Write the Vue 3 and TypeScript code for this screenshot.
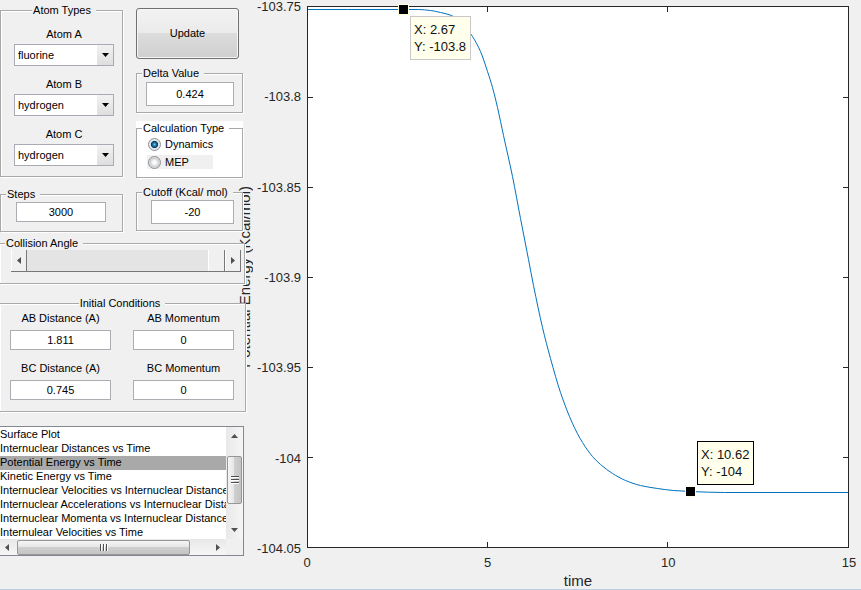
<script setup lang="ts">
import { computed, ref } from 'vue'

interface Tip {
  x: number
  y: number
  lines: string[]
  place: 'below' | 'above'
}

const atoms = ref([
  { id: 'atom-a', label: 'Atom A', value: 'fluorine' },
  { id: 'atom-b', label: 'Atom B', value: 'hydrogen' },
  { id: 'atom-c', label: 'Atom C', value: 'hydrogen' },
])
const elements = ['hydrogen', 'fluorine']

const delta = ref('0.424')
const calculation = ref('Dynamics')
const steps = ref('3000')
const cutoff = ref('-20')
const angle = ref(180)

const conditions = ref([
  { id: 'ab-distance', label: 'AB Distance (A)', value: '1.811' },
  { id: 'ab-momentum', label: 'AB Momentum', value: '0' },
  { id: 'bc-distance', label: 'BC Distance (A)', value: '0.745' },
  { id: 'bc-momentum', label: 'BC Momentum', value: '0' },
])

const plots = [
  'Surface Plot',
  'Internuclear Distances vs Time',
  'Potential Energy vs Time',
  'Kinetic Energy vs Time',
  'Internuclear Velocities vs Internuclear Distance',
  'Internuclear Accelerations vs Internuclear Distance',
  'Internuclear Momenta vs Internuclear Distance',
  'Internulear Velocities vs Time',
]
const selectedPlot = ref('Potential Energy vs Time')

const yTicks = ['-103.75', '-103.8', '-103.85', '-103.9', '-103.95', '-104', '-104.05']
const xTicks = ['0', '5', '10', '15']
const pct = (i: number, n: number) => `${(i / (n - 1)) * 100}%`
const place = (v: number) => `${((v - 1) / 540) * 100}%`

/* Samples of the energy curve in plot units */
const samples: [number, number][] = [
  [0, 3], [40, 3], [96, 3], [111, 3], [123, 4], [133, 6], [144, 9], [155, 17], [165, 30],
  [173, 45], [180, 65], [185, 81], [190, 101], [196, 129], [205, 170], [213, 212], [221, 253],
  [226, 279], [235, 321], [243, 352], [253, 386], [265, 417], [275, 436], [285, 450],
  [293, 458], [305, 467], [318, 474], [333, 479], [350, 482], [366, 484], [383, 485],
  [417, 486], [541, 486],
]

/* Monotone cubic through the samples, written as bezier segments */
const curve = computed(() => {
  const p = samples
  const slope = p.map((_, i) => {
    if (i === 0 || i === p.length - 1) return 0
    const a = (p[i][1] - p[i - 1][1]) / (p[i][0] - p[i - 1][0])
    const b = (p[i + 1][1] - p[i][1]) / (p[i + 1][0] - p[i][0])
    return a * b <= 0 ? 0 : (2 * a * b) / (a + b)
  })
  let d = `M${p[0][0]} ${p[0][1]}`
  for (let i = 0; i < p.length - 1; i++) {
    const h = (p[i + 1][0] - p[i][0]) / 3
    d += `C${p[i][0] + h} ${p[i][1] + slope[i] * h} ${p[i + 1][0] - h} ${p[i + 1][1] - slope[i + 1] * h} ${p[i + 1][0]} ${p[i + 1][1]}`
  }
  return d
})

const tips: Tip[] = [
  { x: 96, y: 3, lines: ['X: 2.67', 'Y: -103.8'], place: 'below' },
  { x: 383, y: 485, lines: ['X: 10.62', 'Y: -104'], place: 'above' },
]
</script>

<template>
  <main class="window">
    <form class="sidebar" @submit.prevent>
      <div class="columns">
        <div class="column">
          <fieldset class="group atoms">
            <legend class="centered">Atom Types</legend>
            <div v-for="atom in atoms" :key="atom.id" class="atom">
              <label :for="atom.id">{{ atom.label }}</label>
              <div class="dropdown">
                <select :id="atom.id" v-model="atom.value">
                  <option v-for="e in elements" :key="e">{{ e }}</option>
                </select>
                <span class="arrow"><svg width="7" height="4" viewBox="0 0 7 4"><path d="M0 0H7L3.5 4Z" /></svg></span>
              </div>
            </div>
          </fieldset>
          <fieldset class="group steps">
            <legend>Steps</legend>
            <input v-model="steps" class="field" type="text" aria-label="Steps" />
          </fieldset>
        </div>

        <div class="column right">
          <button class="update" type="submit">Update</button>
          <fieldset class="group delta">
            <legend>Delta Value</legend>
            <input v-model="delta" class="field tall" type="text" aria-label="Delta Value" />
          </fieldset>
          <div class="calc">
            <fieldset class="group">
              <legend>Calculation Type</legend>
              <label class="radio"><input v-model="calculation" type="radio" value="Dynamics" />Dynamics</label>
              <label class="radio shaded"><input v-model="calculation" type="radio" value="MEP" />MEP</label>
            </fieldset>
          </div>
          <fieldset class="group cutoff">
            <legend>Cutoff (Kcal/ mol)</legend>
            <input v-model="cutoff" class="field tall" type="text" aria-label="Cutoff (Kcal/ mol)" />
          </fieldset>
        </div>
      </div>

      <fieldset class="group collision">
        <legend>Collision Angle</legend>
        <div class="slider">
          <button type="button" aria-label="Decrease angle" @click="angle = Math.max(0, angle - 1)">
            <svg width="4" height="7" viewBox="0 0 4 7"><path d="M4 0V7L0 3.5Z" /></svg>
          </button>
          <input v-model.number="angle" type="range" min="0" max="180" aria-label="Collision Angle" />
          <button type="button" aria-label="Increase angle" @click="angle = Math.min(180, angle + 1)">
            <svg width="4" height="7" viewBox="0 0 4 7"><path d="M0 0V7L4 3.5Z" /></svg>
          </button>
        </div>
      </fieldset>

      <fieldset class="group initial">
        <legend class="centered">Initial Conditions</legend>
        <div class="conditions">
          <div v-for="c in conditions" :key="c.id" class="condition">
            <label :for="c.id">{{ c.label }}</label>
            <input :id="c.id" v-model="c.value" class="field" type="text" />
          </div>
        </div>
      </fieldset>

      <div class="listbox">
        <select v-model="selectedPlot" size="8" aria-label="Plot">
          <option v-for="p in plots" :key="p">{{ p }}</option>
        </select>
        <div class="vbar" aria-hidden="true">
          <svg width="7" height="4" viewBox="0 0 7 4"><path d="M0 4H7L3.5 0Z" /></svg>
          <span class="thumb"><i></i><i></i><i></i></span>
          <svg width="7" height="4" viewBox="0 0 7 4"><path d="M0 0H7L3.5 4Z" /></svg>
        </div>
        <div class="hbar" aria-hidden="true">
          <svg width="4" height="7" viewBox="0 0 4 7"><path d="M4 0V7L0 3.5Z" /></svg>
          <span class="thumb"><i></i><i></i><i></i></span>
          <svg width="4" height="7" viewBox="0 0 4 7"><path d="M0 0V7L4 3.5Z" /></svg>
        </div>
      </div>
    </form>

    <section class="chart" aria-label="Potential energy over time">
      <div class="y-axis">
        <span class="y-title">Potential Energy (Kcal/mol)</span>
        <span v-for="(t, i) in yTicks" :key="t" class="y-label" :style="{ top: pct(i, yTicks.length) }">{{ t }}</span>
      </div>
      <div class="plot">
        <svg class="curve" viewBox="0.5 0.5 540 540" preserveAspectRatio="none">
          <path :d="curve" vector-effect="non-scaling-stroke" />
        </svg>
        <template v-for="(t, i) in yTicks" :key="t">
          <i v-if="i > 0 && i < yTicks.length - 1" class="y-tick" :style="{ top: pct(i, yTicks.length) }"></i>
        </template>
        <template v-for="(t, i) in xTicks" :key="t">
          <i v-if="i > 0 && i < xTicks.length - 1" class="x-tick" :style="{ left: pct(i, xTicks.length) }"></i>
        </template>
        <div
          v-for="tip in tips"
          :key="tip.x"
          class="marker"
          :style="{ left: place(tip.x), top: place(tip.y) }"
        >
          <div class="tip" :class="tip.place">
            <span v-for="l in tip.lines" :key="l">{{ l }}</span>
          </div>
        </div>
      </div>
      <div class="x-axis">
        <span v-for="(t, i) in xTicks" :key="t" class="x-label" :style="{ left: pct(i, xTicks.length) }">{{ t }}</span>
        <span class="x-title">time</span>
      </div>
    </section>
  </main>
</template>

<style>
body {
  margin: 0;
  background: #f0f0f0;
}
</style>

<style scoped>
* {
  box-sizing: border-box;
}
.window {
  display: flex;
  min-height: 100vh;
  background: #f0f0f0;
  border-bottom: 1px solid #b9cfe4;
  font: 11px/13px 'Liberation Sans', Arial, sans-serif;
  color: #000;
}
input,
select,
button {
  font: inherit;
  color: inherit;
  margin: 0;
}

/* Sidebar */
.sidebar {
  flex: none;
  width: 246px;
  position: relative;
  z-index: 1;
}
.columns {
  display: grid;
  grid-template-columns: 123px 107px;
  column-gap: 13px;
}
.column {
  display: flex;
  flex-direction: column;
  padding-top: 4px;
  gap: 11px;
}
.column.right {
  padding-top: 8px;
  gap: 8px;
}
.group {
  --inset: 0px;
  min-width: 0;
  margin: 0;
  padding: 0 8px 0 var(--inset);
  border: 1px solid #a9a9a9;
  box-shadow: 1px 1px 0 #fff, inset 1px 1px 0 #fff;
  background: #f0f0f0;
}
.calc .group {
  background: #fff;
}
legend {
  height: 13px;
  margin-left: calc(5px - var(--inset));
  padding: 0 5px 0 1px;
  background: #f0f0f0;
  white-space: nowrap;
}
legend.centered {
  margin: 0 auto;
}
.calc legend {
  background: #fff;
}
.atoms {
  --inset: 13px;
  padding-top: 11px;
  padding-bottom: 10px;
}
.atom {
  display: flex;
  flex-direction: column;
  gap: 3px;
}
.atom + .atom {
  margin-top: 12px;
}
.atom label,
.condition label {
  text-align: center;
}
.dropdown {
  display: flex;
  height: 22px;
  border: 1px solid #a9abb2;
  background: #fff;
  position: relative;
}
.dropdown select {
  flex: 1;
  appearance: none;
  border: 0;
  padding: 0 18px 0 3px;
  background: transparent;
}
.arrow {
  position: absolute;
  right: 0;
  top: 0;
  bottom: 0;
  width: 16px;
  display: grid;
  place-items: center;
  background: linear-gradient(#f2f2f2, #dedede);
  pointer-events: none;
}
.field {
  display: block;
  width: 100%;
  height: 20px;
  padding: 0;
  border: 1px solid #abadb3;
  background: #fff;
  text-align: center;
}
.field.tall {
  height: 24px;
}
.steps {
  --inset: 15px;
  padding-top: 1px;
  padding-right: 16px;
  padding-bottom: 9px;
}
.update {
  height: 51px;
  margin-right: 4px;
  border: 1px solid #707070;
  border-radius: 3px;
  box-shadow: inset 0 0 0 1px #f6f6f6;
  background: linear-gradient(#f2f2f2 0%, #ebebeb 48%, #dddddd 49%, #cfcfcf 100%);
}
.delta {
  --inset: 9px;
  padding-top: 2px;
  padding-bottom: 6px;
}
.calc {
  padding-top: 1px;
  background: #fff;
}
.calc .group {
  --inset: 10px;
  padding-top: 2px;
  padding-bottom: 8px;
}
.radio {
  display: flex;
  align-items: center;
  gap: 4px;
  height: 14px;
  padding-left: 1px;
}
.radio.shaded {
  width: 66px;
  margin-top: 4px;
  background: #f0f0f0;
}
.radio input {
  appearance: none;
  width: 13px;
  height: 13px;
  border: 1px solid #8e8f8f;
  border-radius: 50%;
  background: radial-gradient(#fbfbfb 20%, #c9ccd0 60%, #f4f4f4 75%);
}
.radio input:checked {
  background: radial-gradient(circle at 50% 50%, #5cc8f0 0, #1b6ea6 25%, #10334f 42%, #dce5ea 50%, #f4f4f4 100%);
}
.cutoff {
  --inset: 14px;
  padding-top: 1px;
  padding-bottom: 6px;
}
.collision {
  --inset: 11px;
  margin: 5px 1px 0 0;
  padding-right: 3px;
  padding-bottom: 11px;
  border-left: 0;
}
.slider {
  display: flex;
  height: 22px;
  border-bottom: 1px solid #777;
}
.slider button {
  width: 16px;
  padding: 0;
  display: grid;
  place-items: center;
  border: 0;
  border-left: 1px solid #fff;
  border-right: 1px solid #777;
  background: #f0f0f0;
}
.slider button svg,
.vbar svg,
.hbar svg {
  fill: #505050;
}
.slider input {
  flex: 1;
  min-width: 0;
  appearance: none;
  background: #e4e4e4;
}
.slider input::-webkit-slider-thumb {
  appearance: none;
  box-sizing: border-box;
  width: 17px;
  height: 21px;
  border-left: 1px solid #fff;
  border-right: 1px solid #777;
  background: #f0f0f0;
}
.initial {
  --inset: 10px;
  margin-top: 13px;
  padding-top: 2px;
  padding-right: 11px;
  padding-bottom: 11px;
  border-left: 0;
}
.conditions {
  display: grid;
  grid-template-columns: 1fr 1fr;
  gap: 12px 22px;
}
.condition {
  display: flex;
  flex-direction: column;
  gap: 5px;
}

/* List box */
.listbox {
  display: grid;
  grid-template-columns: 1fr 17px;
  grid-template-rows: 112px 16px;
  width: 244px;
  margin-top: 14px;
  border: 1px solid #828790;
  border-left: 0;
  background: #f0f0f0;
}
.listbox select {
  min-width: 0;
  width: 100%;
  height: 112px;
  padding: 1px 0 0;
  border: 0;
  outline: 0;
  border-radius: 0;
  overflow: hidden;
  background: #fff;
}
.listbox option {
  height: 14px;
  min-height: 14px;
  padding: 0;
  line-height: 14px;
  overflow: hidden;
}
.listbox option:checked {
  background: #a9a9a9 linear-gradient(#a9a9a9, #a9a9a9);
  color: #000;
}
.vbar,
.hbar {
  display: flex;
  align-items: center;
  justify-content: space-between;
}
.vbar {
  flex-direction: column;
  padding: 7px 0;
  background: linear-gradient(90deg, #e8e8e8, #f6f6f6);
}
.vbar .thumb {
  margin-bottom: 6px;
}
.hbar {
  padding: 0 6px 0 5px;
  background: linear-gradient(#e8e8e8, #f6f6f6);
}
.thumb {
  display: flex;
  align-items: center;
  justify-content: center;
  gap: 1px;
  border: 1px solid #979797;
  border-radius: 2px;
}
.vbar .thumb {
  flex-direction: column;
  width: 15px;
  height: 48px;
  background: linear-gradient(90deg, #f5f5f5, #e6e6e6 45%, #cfcfcf 50%, #c4c4c4);
}
.hbar .thumb {
  width: 173px;
  height: 15px;
  margin-right: 18px;
  background: linear-gradient(#f5f5f5, #e6e6e6 45%, #cfcfcf 50%, #c4c4c4);
}
.vbar .thumb i {
  width: 8px;
  height: 2px;
  border-top: 1px solid #505050;
  background: #fff;
}
.hbar .thumb i {
  width: 2px;
  height: 7px;
  border-left: 1px solid #505050;
  background: #fff;
}

/* Chart */
.chart {
  flex: 1;
  display: grid;
  grid-template-columns: 67px 1fr;
  grid-template-rows: 1fr 41px;
  margin-left: -6px;
  padding: 6px 12px 0 0;
  font-size: 13px;
  line-height: 16px;
  color: #262626;
}
.y-axis,
.plot,
.x-axis {
  position: relative;
}
.y-axis {
  display: flex;
  align-items: center;
}
.y-title {
  writing-mode: vertical-rl;
  transform: rotate(180deg);
  margin-left: -3px;
  font-size: 15px;
  white-space: nowrap;
}
.y-label {
  position: absolute;
  right: 6px;
  margin-top: -7px;
}
.plot {
  border: 1px solid #262626;
  background: #fff;
}
.curve {
  position: absolute;
  width: 100%;
  height: 100%;
}
.curve path {
  fill: none;
  stroke: #0072bd;
  stroke-width: 1;
}
.y-tick {
  position: absolute;
  left: 0;
  right: 0;
  height: 1px;
  background: linear-gradient(#262626, #262626) left / 5px 1px no-repeat,
    linear-gradient(#262626, #262626) right / 5px 1px no-repeat;
}
.x-tick {
  position: absolute;
  top: 0;
  bottom: 0;
  width: 1px;
  margin-left: -1px;
  background: linear-gradient(#262626, #262626) top / 1px 5px no-repeat,
    linear-gradient(#262626, #262626) bottom / 1px 5px no-repeat;
}
.marker {
  position: absolute;
  width: 11px;
  height: 11px;
  margin: -5px 0 0 -5px;
  border: 1px solid #ffffe0;
  background: #000;
}
.tip {
  position: absolute;
  left: 11px;
  display: flex;
  flex-direction: column;
  padding: 4px 4px 4px 3px;
  border: 1px solid #c8c8c8;
  background: #ffffec;
  line-height: 17px;
  white-space: nowrap;
  color: #111;
}
.tip.below {
  top: 11px;
}
.tip.above {
  bottom: 11px;
  border-color: #000;
}
.x-axis {
  grid-column: 2;
}
.x-label {
  position: absolute;
  top: 7px;
  width: 40px;
  margin-left: -20px;
  text-align: center;
}
.x-title {
  position: absolute;
  left: 0;
  right: 0;
  bottom: 0;
  font-size: 15px;
  text-align: center;
}
</style>
